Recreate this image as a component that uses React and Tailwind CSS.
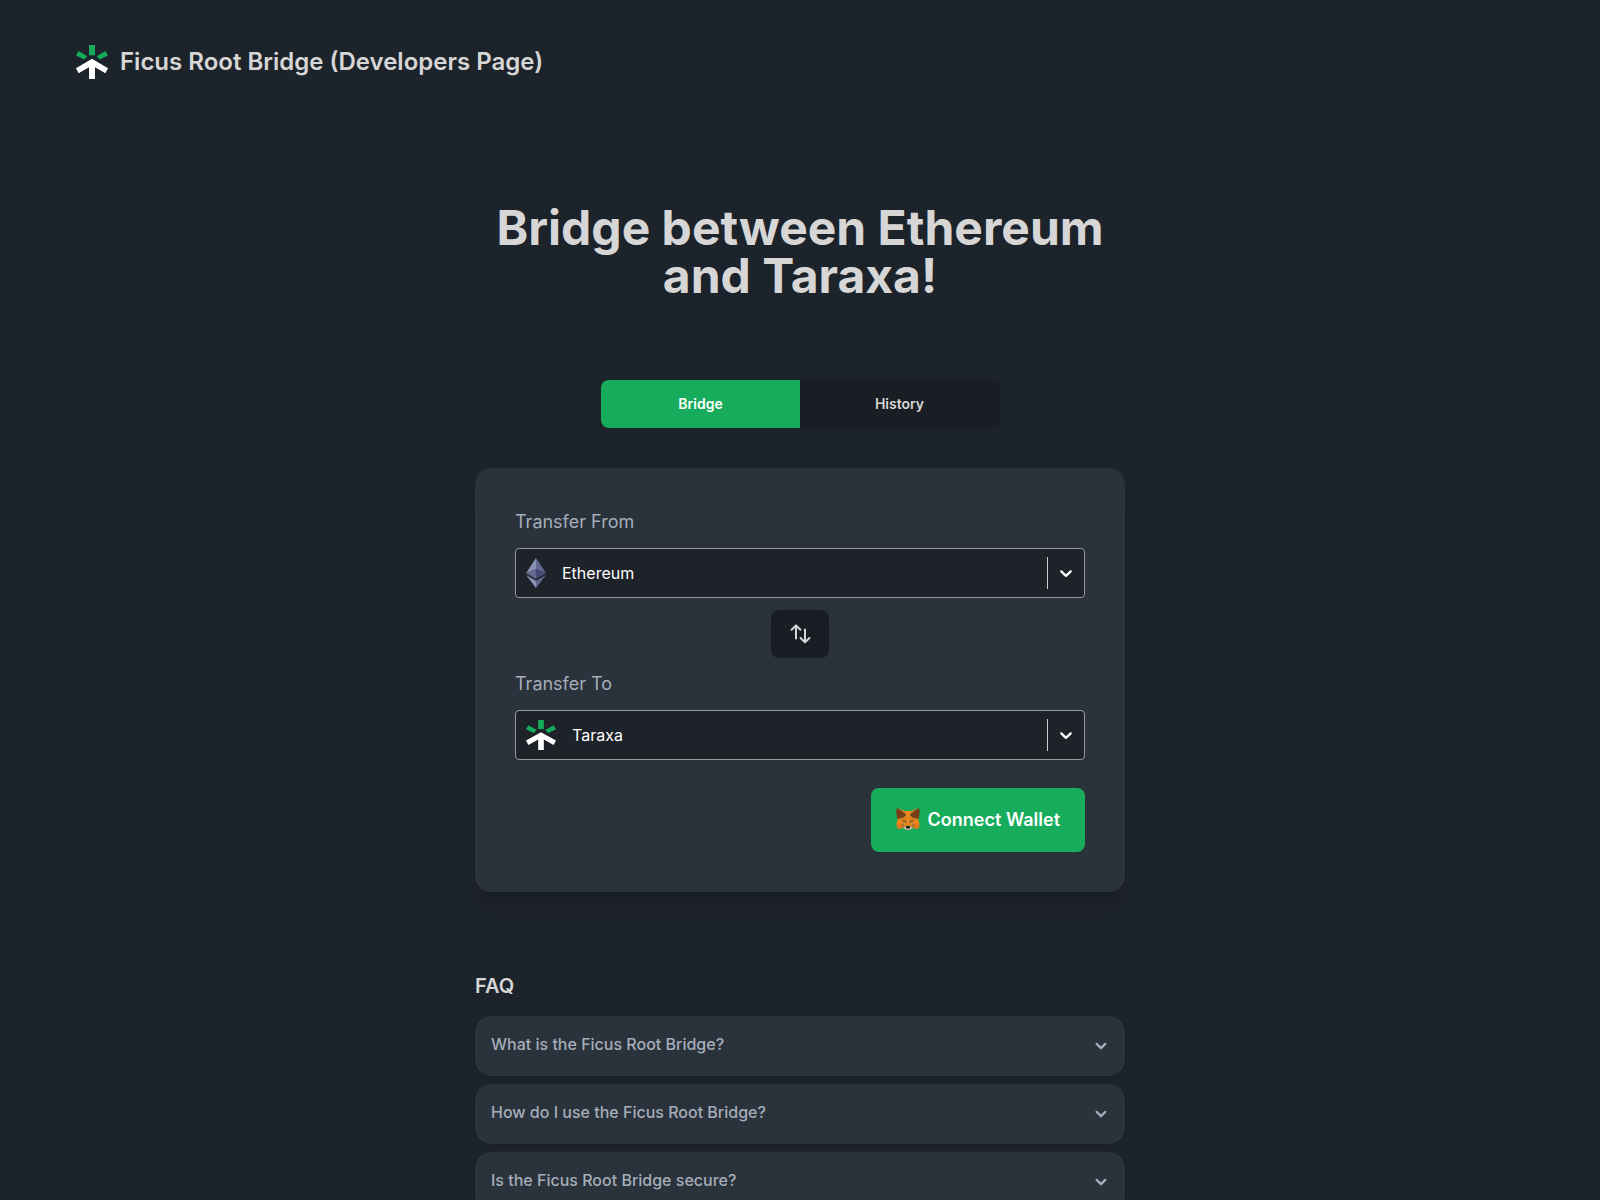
import { useState } from 'react'

const NETWORKS = ['Ethereum', 'Taraxa']

const QUESTIONS = [
  {
    title: 'What is the Ficus Root Bridge?',
    answer: 'A bridge between Ethereum and Taraxa.'
  },
  {
    title: 'How do I use the Ficus Root Bridge?',
    answer: 'Connect your wallet and pick the networks to transfer between.'
  },
  {
    title: 'Is the Ficus Root Bridge secure?',
    answer: 'Every transfer is checked on both networks.'
  }
]

const TaraxaLogo = ({ className }) => (
  <svg className={className} viewBox="0 0 32 34" preserveAspectRatio="none" aria-hidden="true">
    <g fill="#15ac5b">
      <path d="M13 0h6v10.3h-6z" />
      <path d="M2.6 6 11.4 11.2 8.2 14.6 0 10.4z" />
      <path d="M29.4 6 20.6 11.2 23.8 14.6 32 10.4z" />
    </g>
    <path fill="#fff" d="M16 13.8 32 23.2 29.4 28.2 19 22.2V34h-6V22.2L2.6 28.2 0 23.2z" />
  </svg>
)

const EthereumLogo = ({ className }) => (
  <svg className={className} viewBox="0 0 20 30" aria-hidden="true">
    <path fill="#8a92b2" d="M10 0 0 15.3l10-4.2z" />
    <path fill="#62688f" d="M10 0v11.1l10 4.2zM0 15.3l10 5.6v-9.8z" />
    <path fill="#454a75" d="M20 15.3l-10 5.6v-9.8z" />
    <path fill="#8a92b2" d="M0 17.1 10 30v-7.2z" />
    <path fill="#62688f" d="M20 17.1 10 30v-7.2z" />
  </svg>
)

const MetaMaskLogo = ({ className }) => (
  <svg className={className} viewBox="31 35 257 257" aria-hidden="true">
    <path fill="#e2761b" d="M274.1 35.5 174.6 109.4 193 65.8z" />
    <g fill="#e4761b">
      <path d="M44.4 35.5 143.1 110.1 125.6 65.8z" />
      <path d="M238.3 206.8 211.8 247.4 268.5 263 284.8 207.7z" />
      <path d="M33.9 207.7 50.1 263 106.8 247.4 80.3 206.8z" />
      <path d="M103.6 138.2 87.8 162.1 144.1 164.6 142.1 104.1z" />
      <path d="M214.9 138.2 175.9 103.4 174.6 164.6 230.8 162.1z" />
      <path d="M106.8 247.4 140.6 230.9 111.4 208.1z" />
      <path d="M177.9 230.9 211.8 247.4 207.1 208.1z" />
    </g>
    <g fill="#d7c1b3">
      <path d="M211.8 247.4 177.9 230.9 180.6 253 180.3 262.3z" />
      <path d="M106.8 247.4 138.3 262.3 138.1 253 140.6 230.9z" />
    </g>
    <g fill="#233447">
      <path d="M138.8 193.5 110.6 185.2 130.5 176.1z" />
      <path d="M179.7 193.5 188 176.1 208 185.2z" />
    </g>
    <g fill="#cd6116">
      <path d="M106.8 247.4 111.6 206.8 80.3 207.7z" />
      <path d="M207 206.8 211.8 247.4 238.3 207.7z" />
      <path d="M230.8 162.1 174.6 164.6 179.8 193.5 188.1 176.1 208.1 185.2z" />
      <path d="M110.6 185.2 130.6 176.1 138.8 193.5 144.1 164.6 87.8 162.1z" />
    </g>
    <g fill="#e4751f">
      <path d="M87.8 162.1 111.4 208.1 110.6 185.2z" />
      <path d="M208.1 185.2 207.1 208.1 230.8 162.1z" />
      <path d="M144.1 164.6 138.8 193.5 145.4 227.6 146.9 182.7z" />
      <path d="M174.6 164.6 171.9 182.6 173.1 227.6 179.8 193.5z" />
    </g>
    <g fill="#f6851b">
      <path d="M179.8 193.5 173.1 227.6 177.9 230.9 207.1 208.1 208.1 185.2z" />
      <path d="M110.6 185.2 111.4 208.1 140.6 230.9 145.4 227.6 138.8 193.5z" />
    </g>
    <path fill="#c0ad9e" d="M180.3 262.3 180.6 253 178.1 250.8H140.4L138.1 253 138.3 262.3 106.8 247.4 117.8 256.4 140.1 271.9H178.4L200.8 256.4 211.8 247.4z" />
    <path fill="#161616" d="M177.9 230.9 173.1 227.6H145.4L140.6 230.9 138.1 253 140.4 250.8H178.1L180.6 253z" />
    <g fill="#763d16">
      <path d="M278.3 114.2 286.8 73.4 274.1 35.5 177.9 106.9 214.9 138.2 267.2 153.5 278.8 140 273.8 136.4 281.8 129.1 275.6 124.3 283.6 118.2z" />
      <path d="M31.8 73.4 40.3 114.2 34.9 118.2 42.9 124.3 36.8 129.1 44.8 136.4 39.8 140 51.3 153.5 103.6 138.2 140.6 106.9 44.4 35.5z" />
    </g>
    <g fill="#f6851b">
      <path d="M267.2 153.5 214.9 138.2 230.8 162.1 207.1 208.1 238.3 207.7H284.8z" />
      <path d="M103.6 138.2 51.3 153.5 33.9 207.7H80.3L111.4 208.1 87.8 162.1z" />
      <path d="M174.6 164.6 177.9 106.9 193.1 65.8H125.6L140.6 106.9 144.1 164.6 145.3 182.8 145.4 227.6H173.1L173.3 182.8z" />
    </g>
  </svg>
)

const SwapIcon = ({ className }) => (
  <svg className={className} viewBox="0 0 24 24" fill="none" stroke="currentColor" strokeWidth="2" strokeLinecap="round" strokeLinejoin="round" aria-hidden="true">
    <path d="M8 16.5V3.5M3.6 7.8 8 3.4 12.4 7.8" />
    <path d="M17 7.5V20.3M12.6 16 17 20.4 21.4 16" />
  </svg>
)

const Chevron = ({ className }) => (
  <svg className={className} viewBox="0 0 20 20" fill="currentColor" aria-hidden="true">
    <path d="M4.516 7.548c0.436-0.446 1.043-0.481 1.576 0l3.908 3.747 3.908-3.747c0.533-0.481 1.141-0.446 1.574 0 0.436 0.445 0.408 1.197 0 1.615-0.406 0.418-4.695 4.502-4.695 4.502-0.217 0.223-0.502 0.335-0.787 0.335s-0.57-0.112-0.789-0.335c0 0-4.287-4.084-4.695-4.502s-0.436-1.17 0-1.615z" />
  </svg>
)

const NetworkSelect = ({ id, label, value, onChange }) => (
  <div className="flex flex-col gap-3">
    <label htmlFor={id} className="text-lg leading-7 text-[#a6adba]">{label}</label>
    <div className="flex items-center gap-4 h-[50px] pl-[10px] rounded border border-[#999999] bg-[#1e2229] text-white">
      {value === 'Ethereum'
        ? <EthereumLogo className="w-5 h-[30px] shrink-0" />
        : <TaraxaLogo className="w-[30px] h-[30px] shrink-0" />}
      <select
        id={id}
        className="flex-1 min-w-0 h-full appearance-none bg-transparent text-base focus:outline-none"
        value={value}
        onChange={(e) => onChange(e.target.value)}
      >
        {NETWORKS.map((network) => (
          <option key={network} className="bg-[#1e2229]">{network}</option>
        ))}
      </select>
      <div className="flex items-center">
        <span className="w-px h-8 bg-[#cccccc]" />
        <Chevron className="w-5 h-5 mx-2" />
      </div>
    </div>
  </div>
)

const Question = ({ title, answer }) => {
  const [open, setOpen] = useState(false)

  return (
    <div className="rounded-2xl bg-[#2a323b] shadow-sm text-[#a6adba]">
      <button
        type="button"
        className="w-full min-h-[60px] px-4 flex items-start justify-between text-left font-medium cursor-pointer"
        aria-expanded={open}
        onClick={() => setOpen(!open)}
      >
        <span className="py-4">{title}</span>
        <svg className="w-4 h-4 mt-[22px] shrink-0" viewBox="0 0 16 16" fill="none" stroke="currentColor" strokeWidth="2.3" strokeLinecap="round" aria-hidden="true">
          <path d="M3.7 5.9 8 10.1 12.3 5.9" />
        </svg>
      </button>
      {open && <p className="px-4 pb-4">{answer}</p>}
    </div>
  )
}

const App = () => {
  const [tab, setTab] = useState('bridge')
  const [from, setFrom] = useState('Ethereum')
  const [to, setTo] = useState('Taraxa')

  const swap = () => {
    setFrom(to)
    setTo(from)
  }

  const tabColor = (name) => (tab === name ? 'bg-[#16ac5b] text-white' : 'bg-[#191e24] text-[#d6d6d6]')

  return (
    <div className="min-h-screen bg-[#1d232a] text-[#d6d6d6] font-[Inter,sans-serif]">
      {/* Header */}
      <header className="flex items-center gap-3 px-19 pt-[45px]">
        <TaraxaLogo className="w-8 h-[34px]" />
        <span className="text-2xl font-semibold">Ficus Root Bridge (Developers Page)</span>
      </header>

      <main className="max-w-[650px] mx-auto pt-[125px] pb-20 flex flex-col items-center">
        <h1 className="text-5xl leading-none font-bold text-center">Bridge between Ethereum and Taraxa!</h1>

        {/* Tabs */}
        <div className="flex mt-20 text-sm font-semibold">
          <button
            type="button"
            className={`w-[200px] h-12 rounded-l-lg cursor-pointer ${tabColor('bridge')}`}
            onClick={() => setTab('bridge')}
          >
            Bridge
          </button>
          <button
            type="button"
            className={`w-[200px] h-12 -ml-px rounded-r-lg cursor-pointer ${tabColor('history')}`}
            onClick={() => setTab('history')}
          >
            History
          </button>
        </div>

        {/* Transfer card */}
        <section className="w-full mt-10 p-10 rounded-2xl bg-[#2a323b] shadow-xl flex flex-col gap-3">
          <NetworkSelect id="from" label="Transfer From" value={from} onChange={setFrom} />
          <button
            type="button"
            className="self-center h-12 px-[17px] rounded-lg bg-[#191e24] cursor-pointer"
            aria-label="Swap networks"
            onClick={swap}
          >
            <SwapIcon className="w-6 h-6" />
          </button>
          <NetworkSelect id="to" label="Transfer To" value={to} onChange={setTo} />
          <button
            type="button"
            className="self-end mt-4 h-16 px-[25px] flex items-center gap-2 rounded-lg bg-[#16ac5b] text-white text-lg font-semibold cursor-pointer"
          >
            <MetaMaskLogo className="w-6 h-6" />
            Connect Wallet
          </button>
        </section>

        {/* FAQ */}
        <section className="w-full mt-20 flex flex-col gap-2">
          <h2 className="mb-2 text-xl font-semibold">FAQ</h2>
          {QUESTIONS.map((q) => (
            <Question key={q.title} title={q.title} answer={q.answer} />
          ))}
        </section>
      </main>
    </div>
  )
}

export default App
